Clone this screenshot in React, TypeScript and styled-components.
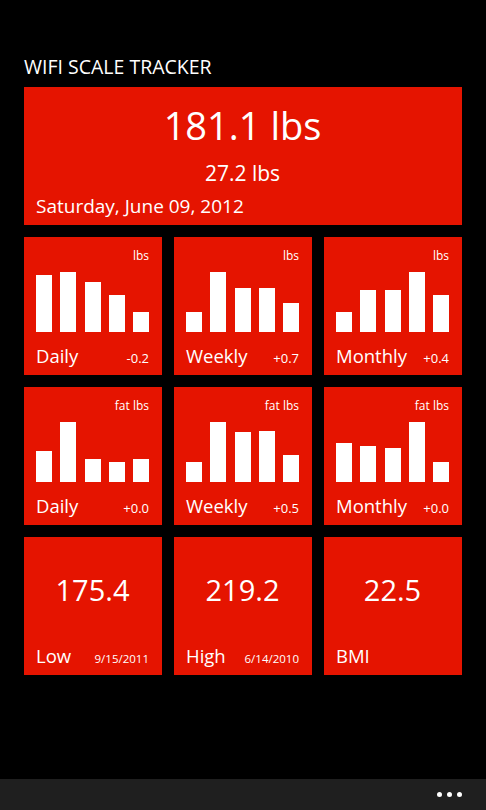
import styled, { createGlobalStyle } from 'styled-components';

const GlobalStyle = createGlobalStyle`
  html, body {
    margin: 0;
    padding: 0;
    background: #000;
  }
  body {
    font-family: 'Open Sans', 'Noto Sans', sans-serif;
    color: #fff;
  }
`;

const RED = '#e51400';

interface ChartData {
  unit: string;
  label: string;
  change: string;
  bars: number[];
}

const weightCharts: ChartData[] = [
  { unit: 'lbs', label: 'Daily', change: '-0.2', bars: [57, 60, 50, 37, 20] },
  { unit: 'lbs', label: 'Weekly', change: '+0.7', bars: [20, 60, 44, 44, 29] },
  { unit: 'lbs', label: 'Monthly', change: '+0.4', bars: [20, 42, 42, 60, 37] },
];

const fatCharts: ChartData[] = [
  { unit: 'fat lbs', label: 'Daily', change: '+0.0', bars: [31, 60, 23, 20, 23] },
  { unit: 'fat lbs', label: 'Weekly', change: '+0.5', bars: [20, 60, 50, 51, 27] },
  { unit: 'fat lbs', label: 'Monthly', change: '+0.0', bars: [39, 36, 34, 60, 20] },
];

const stats = [
  { value: '175.4', label: 'Low', date: '9/15/2011' },
  { value: '219.2', label: 'High', date: '6/14/2010' },
  { value: '22.5', label: 'BMI', date: '' },
];

const Page = styled.div`
  height: 100vh;
  display: flex;
  flex-direction: column;
  background: #000;
`;

const Title = styled.h1`
  margin: 55px 0 8px 24px;
  font-size: 19.5px;
  line-height: 24px;
  font-weight: 400;
`;

const Grid = styled.div`
  display: grid;
  grid-template-columns: repeat(3, 138px);
  grid-auto-rows: 138px;
  gap: 12px;
  padding: 0 24px;
`;

const Tile = styled.div`
  background: ${RED};
  display: flex;
  flex-direction: column;
  padding: 0 13px 0 12px;
  box-sizing: border-box;
  overflow: hidden;
`;

const MainTile = styled(Tile)`
  grid-column: 1 / -1;
`;

const BigWeight = styled.div`
  margin-top: 15px;
  text-align: center;
  font-size: 38px;
  line-height: 46px;
`;

const FatWeight = styled.div`
  margin-top: 12px;
  text-align: center;
  font-size: 21px;
  line-height: 26px;
`;

const DateLine = styled.div`
  margin-top: 8px;
  font-size: 19px;
  line-height: 24px;
`;

const Unit = styled.div`
  margin-top: 11px;
  text-align: right;
  font-size: 12px;
  line-height: 16px;
`;

const Chart = styled.div`
  margin-top: 8px;
  height: 60px;
  display: flex;
  align-items: flex-end;
  justify-content: space-between;
`;

const Bar = styled.div`
  width: 16px;
  background: #fff;
`;

const Footer = styled.div`
  margin-top: auto;
  margin-bottom: 7px;
  display: flex;
  justify-content: space-between;
  align-items: baseline;
`;

const Label = styled.span`
  font-size: 18.5px;
  line-height: 24px;
`;

const Small = styled.span<{ $tight?: boolean }>`
  font-size: ${(p) => (p.$tight ? '11.5px' : '13px')};
  line-height: 16px;
`;

const StatValue = styled.div`
  margin-top: 35px;
  text-align: center;
  font-size: 29px;
  line-height: 36px;
`;

const AppBar = styled.div`
  margin-top: auto;
  height: 31px;
  background: #1f1f1f;
  display: flex;
  justify-content: flex-end;
  align-items: center;
  gap: 5px;
  padding-right: 24px;
`;

const Dot = styled.span`
  width: 5px;
  height: 5px;
  border-radius: 50%;
  background: #fff;
`;

function ChartTile({ data }: { data: ChartData }) {
  return (
    <Tile>
      <Unit>{data.unit}</Unit>
      <Chart>
        {data.bars.map((h, i) => (
          <Bar key={i} style={{ height: h }} />
        ))}
      </Chart>
      <Footer>
        <Label>{data.label}</Label>
        <Small>{data.change}</Small>
      </Footer>
    </Tile>
  );
}

export default function App() {
  return (
    <Page>
      <GlobalStyle />
      <Title>WIFI SCALE TRACKER</Title>
      <Grid>
        <MainTile>
          <BigWeight>181.1 lbs</BigWeight>
          <FatWeight>27.2 lbs</FatWeight>
          <DateLine>Saturday, June 09, 2012</DateLine>
        </MainTile>
        {weightCharts.map((c) => (
          <ChartTile key={`w-${c.label}`} data={c} />
        ))}
        {fatCharts.map((c) => (
          <ChartTile key={`f-${c.label}`} data={c} />
        ))}
        {stats.map((s) => (
          <Tile key={s.label}>
            <StatValue>{s.value}</StatValue>
            <Footer>
              <Label>{s.label}</Label>
              <Small $tight>{s.date}</Small>
            </Footer>
          </Tile>
        ))}
      </Grid>
      <AppBar>
        <Dot />
        <Dot />
        <Dot />
      </AppBar>
    </Page>
  );
}
